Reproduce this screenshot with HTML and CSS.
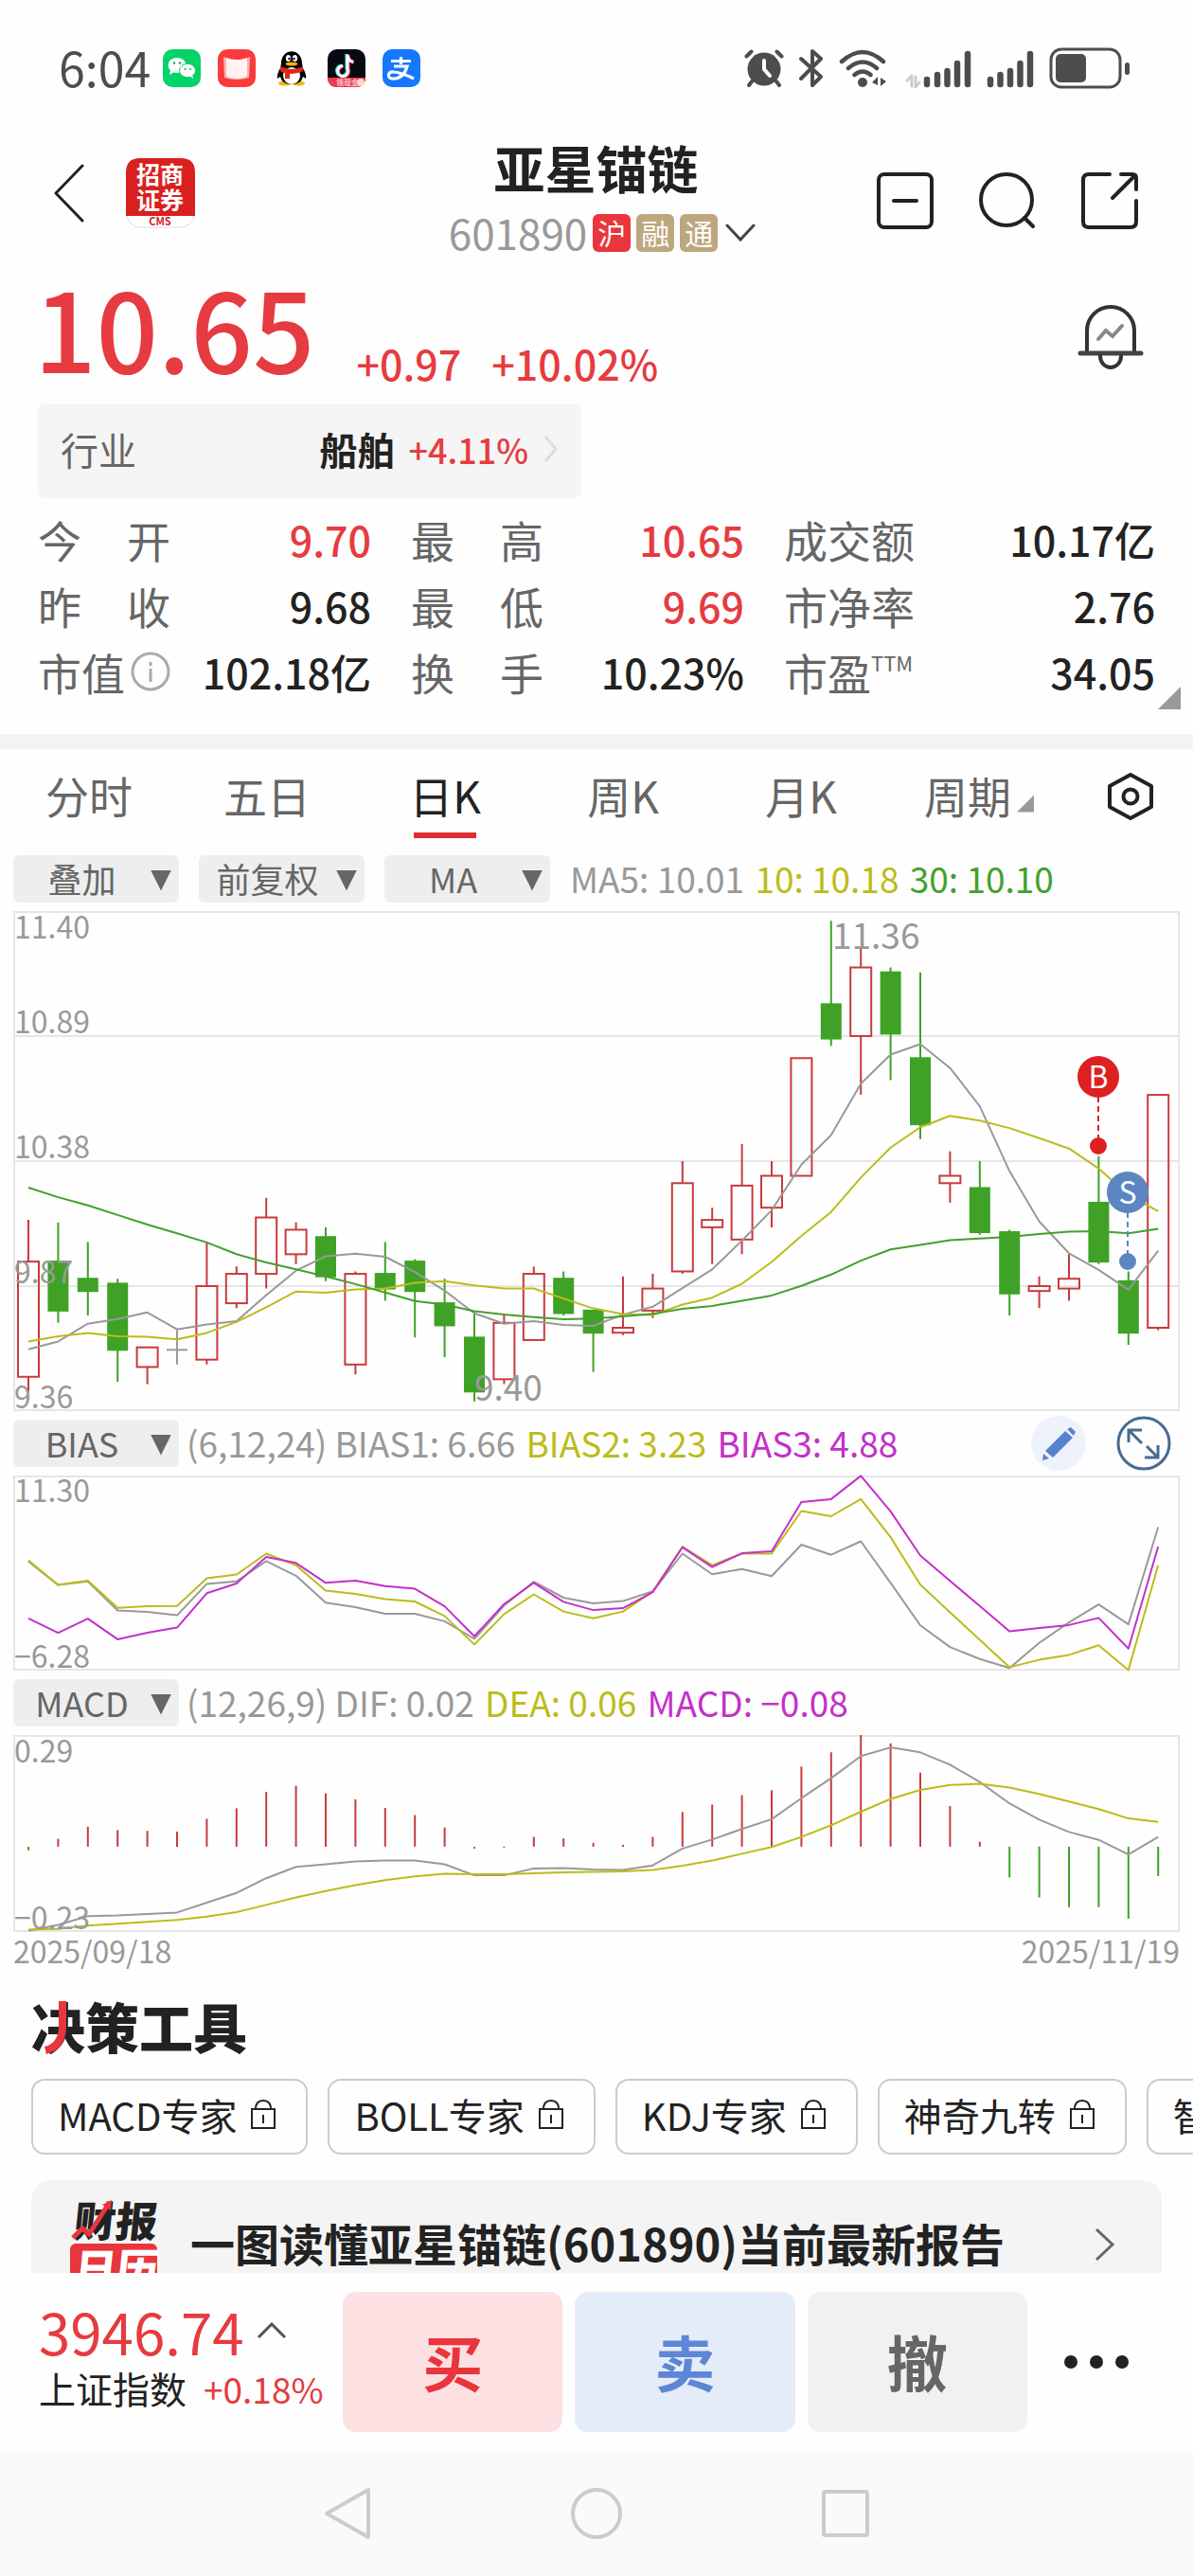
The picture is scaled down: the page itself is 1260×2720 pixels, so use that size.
FILE: index.html
```html
<!DOCTYPE html>
<html lang="zh-CN">
<head>
<meta charset="utf-8">
<meta name="viewport" content="width=device-width, initial-scale=1">
<title>亚星锚链 601890</title>
<link rel="stylesheet" href="styles.css">
</head>
<body>
<div class="screen">

  <div class="status">
    <div class="status-left">
      <span class="clock">6:04</span>
      <svg class="app" viewBox="0 0 40 40"><rect width="40" height="40" rx="10" fill="#06d367"/><ellipse cx="15" cy="17" rx="9.500" ry="8" fill="#fff"/><path d="M8 22l-1 5 5-3z" fill="#fff"/><ellipse cx="26" cy="22.500" rx="8.500" ry="7.200" fill="#fff" stroke="#06d367"/><path d="M28 28l4 3-1-5z" fill="#fff"/><g fill="#06a853"><circle cx="12" cy="14.500" r="1.200"/><circle cx="18" cy="14.500" r="1.200"/><circle cx="23.500" cy="21" r="1"/><circle cx="29" cy="21" r="1"/></g></svg>
      <svg class="app" viewBox="0 0 40 40"><rect width="40" height="40" rx="10" fill="#fb3b3b"/><path d="M6 8l5 2q9 3 18 0l5-2-1 22q-13 4-26 0z" fill="#fbb3ad"/><path d="M9 9q11 4 22 0v20q-11 4-22 0z" fill="#fff2f0"/></svg>
      <svg class="app" viewBox="0 0 40 40"><ellipse cx="13" cy="36" rx="7" ry="2.500" fill="#f5b400"/><ellipse cx="27" cy="36" rx="7" ry="2.500" fill="#f5b400"/><path d="M9 15C9-2 31-2 31 15l1 5q4 7 3 11l-3-2q-2 8-12 8T8 29l-3 2q-1-4 3-11z" fill="#000"/><ellipse cx="20" cy="28" rx="9" ry="9" fill="#fff"/><path d="M8 18q12 6 24 0v5q-6 3-14 3v5h-5v-6q-3 0-5-2z" fill="#e0251b"/><ellipse cx="16.500" cy="9.500" rx="2.600" ry="3.600" fill="#fff"/><ellipse cx="23.500" cy="9.500" rx="2.600" ry="3.600" fill="#fff"/><circle cx="17.500" cy="10" r="1.200"/><circle cx="22.500" cy="10" r="1.200"/><ellipse cx="20" cy="15.500" rx="6.500" ry="2" fill="#f5b400"/></svg>
      <svg class="app" viewBox="0 0 40 40"><rect width="40" height="40" rx="10" fill="#080a12"/><path d="M20 5v15a5.500 5.500 0 1 1-5-3M20 6q1 6 7 7" fill="none" stroke="#27e8e4" stroke-width="3.200"/><path d="M22 6v15a5.500 5.500 0 1 1-5-3M22 7q1 6 6 7" fill="none" stroke="#f52c58" stroke-width="3.200"/><path d="M21 5.500v15a5.500 5.500 0 1 1-5-3M21 6.500q1 6 6 7" fill="none" stroke="#fff" stroke-width="3"/><path d="M0 30h40q0 10-10 10H10Q0 40 0 30z" fill="#ee3a55"/><text x="9" y="38" class="ribbon">领现金</text><circle cx="35" cy="35" r="4" fill="#ffd7c8"/></svg>
      <svg class="app" viewBox="0 0 40 40"><rect width="40" height="40" rx="10" fill="#1677ff"/><path d="M19.500 8v8M9 12.500h21M12 18h14q-4 14-16 13c-6-1-4-8 2-7q9 1 21 7" fill="none" stroke="#fff" stroke-width="3.200"/></svg>
    </div>
    <div class="status-right">
      <svg width="42" height="42" viewBox="0 0 42 42" fill="none" stroke="#4d4d4d" stroke-width="4" stroke-linecap="round"><circle cx="21" cy="22" r="17.500" fill="#4d4d4d" stroke="none"/><path d="M2.500 8.500l5-5M34.500 3.500l5 5M8 35l-3 4M34 35l3 4"/><path d="M21 13v9l6 7" stroke="#fff"/></svg>
      <svg width="26" height="42" viewBox="0 0 26 42" fill="none" stroke="#4d4d4d" stroke-width="4" stroke-linejoin="round" stroke-linecap="round"><path d="M2 11l21 19-9 9V3l9 8L2 32"/></svg>
      <svg width="52" height="42" viewBox="0 0 52 42" fill="none" stroke="#4d4d4d" stroke-width="4.500" stroke-linecap="round"><path d="M3 14q22-20 44 0M10 21q15-13 30 0M16.500 28q8.500-7 17 0"/><circle cx="25" cy="36" r="5" fill="#4d4d4d" stroke="none"/><path d="M41 30v9l-6-3zM44 31v9l6-5z" fill="#4d4d4d" stroke="none"/></svg>
      <svg width="72" height="42" viewBox="0 0 72 42" stroke="#4d4d4d" stroke-width="6.500" stroke-linecap="round"><path d="M9 29v11M9 29l-5 5M13 30v11l4-5" stroke="#ccc" stroke-width="3" fill="none"/><path d="M25 33v5M36 28v10M46.500 24v14M57 16v22M68 6v32"/></svg>
      <svg width="50" height="42" viewBox="0 0 50 42" stroke="#4d4d4d" stroke-width="6.500" stroke-linecap="round"><path d="M4 33v5M14.500 28v10M25 24v14M35.500 16v22M46 6v32"/></svg>
      <svg width="86" height="44" viewBox="0 0 86 44"><rect x="2" y="2" width="73" height="40" rx="11" fill="none" stroke="#4d4d4d" stroke-width="3"/><rect x="7" y="7" width="32" height="30" rx="5" fill="#4d4d4d"/><rect x="80" y="16" width="5" height="13" rx="2.500" fill="#4d4d4d"/></svg>
    </div>
  </div>

  <header class="header">
    <div class="header-left">
      <button class="icon-btn" aria-label="返回"><svg width="32" height="62" viewBox="0 0 32 62" fill="none" stroke="#222" stroke-width="3" stroke-linecap="round" stroke-linejoin="round"><path d="M30 2L2 31l28 29"/></svg></button>
      <svg class="logo" width="73" height="74" viewBox="0 0 73 74"><rect x="1" y="1" width="71" height="72" rx="14" fill="#fff" stroke="#ddd"/><path d="M15 0h43q15 0 15 15v46H0V15Q0 0 15 0z" fill="#d8201f"/><text x="11" y="27" class="logo-cn">招商</text><text x="11" y="54" class="logo-cn">证券</text><text x="36" y="71" class="logo-en">CMS</text></svg>
    </div>
    <div class="header-mid">
      <h1 class="name">亚星锚链</h1>
      <div class="code-row">
        <span class="code">601890</span>
        <span class="tag tag-red">沪</span>
        <span class="tag">融</span>
        <span class="tag">通</span>
        <svg width="32" height="20" viewBox="0 0 32 20" fill="none" stroke="#444" stroke-width="3" stroke-linecap="round"><path d="M2 2l14 15L30 2"/></svg>
      </div>
    </div>
    <div class="header-right">
      <button class="icon-btn" aria-label="移除自选"><svg width="60" height="60" viewBox="0 0 60 60" fill="none" stroke="#222" stroke-width="4" stroke-linecap="round"><rect x="2" y="2" width="56" height="56" rx="6"/><path d="M18 30h24"/></svg></button>
      <button class="icon-btn" aria-label="搜索"><svg width="60" height="60" viewBox="0 0 60 60" fill="none" stroke="#222" stroke-width="4" stroke-linecap="round"><circle cx="29" cy="29" r="27"/><path d="M48 48l9 9"/></svg></button>
      <button class="icon-btn" aria-label="分享"><svg width="60" height="60" viewBox="0 0 60 60" fill="none" stroke="#222" stroke-width="4" stroke-linecap="round"><path d="M30 2H8Q2 2 2 8v44q0 6 6 6h44q6 0 6-6V30M42 2h12q4 0 4 4v12M56 4L33 27"/></svg></button>
    </div>
  </header>

  <section class="quote">
    <div class="price-row">
      <span class="price">10.65</span>
      <span class="change">+0.97</span>
      <span class="change">+10.02%</span>
      <button class="icon-btn bell" aria-label="预警"><svg width="70" height="72" viewBox="0 0 70 72" fill="none" stroke="#333" stroke-width="4" stroke-linecap="round"><path d="M10 50V29a25 25 0 0 1 50 0v21"/><path d="M3 53h64" stroke="#444" stroke-width="5"/><path d="M24 56a11 12 0 0 0 22 0"/><path d="M22 38l8-9 7 6 10-11" stroke="#888"/></svg></button>
    </div>
    <a class="industry" href="#">
      <span class="industry-label">行业</span>
      <strong class="industry-name">船舶</strong>
      <span class="industry-change">+4.11%</span>
      <svg width="16" height="30" viewBox="0 0 16 30" fill="none" stroke="#ddd" stroke-width="3"><path d="M2 2l11 13L2 28"/></svg>
    </a>
    <dl class="stats">
      <div class="stat"><dt><span>今</span><span>开</span></dt><dd class="up">9.70</dd></div>
      <div class="stat"><dt><span>最</span><span>高</span></dt><dd class="up">10.65</dd></div>
      <div class="stat"><dt>成交额</dt><dd>10.17亿</dd></div>
      <div class="stat"><dt><span>昨</span><span>收</span></dt><dd>9.68</dd></div>
      <div class="stat"><dt><span>最</span><span>低</span></dt><dd class="up">9.69</dd></div>
      <div class="stat"><dt>市净率</dt><dd>2.76</dd></div>
      <div class="stat"><dt>市值<svg width="42" height="42" viewBox="0 0 42 42" fill="none" stroke="#aaa" stroke-width="3"><circle cx="21" cy="21" r="19"/><path d="M21 18v14M21 11v4"/></svg></dt><dd>102.18亿</dd></div>
      <div class="stat"><dt><span>换</span><span>手</span></dt><dd>10.23%</dd></div>
      <div class="stat"><dt>市盈<sup>TTM</sup></dt><dd>34.05</dd></div>
    </dl>
    <span class="more-corner"></span>
  </section>

  <nav class="tabs">
    <button class="tab">分时</button>
    <button class="tab">五日</button>
    <button class="tab active">日K</button>
    <button class="tab">周K</button>
    <button class="tab">月K</button>
    <button class="tab">周期<span class="tab-corner"></span></button>
    <button class="tab-settings" aria-label="设置"><svg width="50" height="52" viewBox="0 0 50 52" fill="none" stroke="#222" stroke-width="4" stroke-linejoin="round"><path d="M25 3l22 12v22L25 49 3 37V15z"/><circle cx="25" cy="26" r="7.500"/></svg></button>
  </nav>

  <section class="charts">
    <div class="legend">
      <label class="picker"><select aria-label="叠加"><option>叠加</option></select></label>
      <label class="picker"><select aria-label="复权"><option>前复权</option></select></label>
      <label class="picker"><select aria-label="主图指标"><option>MA</option></select></label>
      <span class="readout"><span class="c-grey">MA5: 10.01</span> <span class="c-yellow">10: 10.18</span> <span class="c-green">30: 10.10</span></span>
    </div>

    <svg class="plot" viewBox="0 0 1232 528">
      <rect class="frame" x="1" y="1" width="1230" height="526"/>
      <path class="frame" d="M0 132h1232M0 264h1232M0 396h1232"/>
      <g id="candles"></g>
      <g id="averages"></g>
      <g class="axis">
        <text x="1" y="29">11.40</text>
        <text x="1" y="129">10.89</text>
        <text x="1" y="261">10.38</text>
        <text x="1" y="393">9.87</text>
        <text x="1" y="525">9.36</text>
      </g>
      <g class="extreme"><text x="865" y="40">11.36</text><text x="487" y="517">9.40</text></g>
      <path d="M1146 196v44" stroke="#dd2022" stroke-width="2" stroke-dasharray="6 4"/>
      <circle cx="1146" cy="175" r="22" fill="#dd2022"/><circle cx="1146" cy="248" r="9" fill="#dd2022"/>
      <path d="M1177 318v44" stroke="#5c86c2" stroke-width="2" stroke-dasharray="6 4"/>
      <circle cx="1177" cy="297" r="22" fill="#5c86c2"/><circle cx="1177" cy="370" r="9" fill="#5c86c2"/>
      <text class="mark" x="1146" y="187">B</text><text class="mark" x="1177" y="309">S</text>
    </svg>

    <div class="legend legend-sub">
      <label class="picker"><select aria-label="副图指标一"><option>BIAS</option></select></label>
      <span class="readout"><span class="c-grey">(6,12,24) BIAS1: 6.66</span> <span class="c-yellow">BIAS2: 3.23</span> <span class="c-purple">BIAS3: 4.88</span></span>
      <span class="tools">
        <button class="icon-btn" aria-label="编辑"><svg width="58" height="58" viewBox="0 0 58 58"><circle cx="29" cy="29" r="29" fill="#eef2fa"/><path d="M36 16l8 7-21 21-8-7zM38 14l4-2 5 5-2 4zM13 40l6 5-7 2z" fill="#5882d0"/></svg></button>
        <button class="icon-btn" aria-label="全屏"><svg width="58" height="58" viewBox="0 0 58 58" fill="none" stroke="#486b90" stroke-width="3"><circle cx="29" cy="29" r="27"/><path d="M13 28V15h14M14 16l13 13M44 31v13H30M43 43L32 32"/></svg></button>
      </span>
    </div>
    <svg class="plot" viewBox="0 0 1232 206">
      <rect class="frame" x="1" y="1" width="1230" height="204"/>
      <g id="bias"></g>
      <g class="axis"><text x="1" y="28">11.30</text><text x="1" y="203">−6.28</text></g>
    </svg>

    <div class="legend legend-sub">
      <label class="picker"><select aria-label="副图指标二"><option>MACD</option></select></label>
      <span class="readout"><span class="c-grey">(12,26,9) DIF: 0.02</span> <span class="c-yellow">DEA: 0.06</span> <span class="c-purple">MACD: −0.08</span></span>
    </div>
    <svg class="plot" viewBox="0 0 1232 208">
      <rect class="frame" x="1" y="1" width="1230" height="206"/>
      <g id="macd"></g>
      <g class="axis"><text x="1" y="29">0.29</text><text x="1" y="205">−0.23</text></g>
    </svg>
    <div class="dates"><span>2025/09/18</span><span>2025/11/19</span></div>
  </section>

  <section class="decide">
    <h2 class="decide-title">决策工具<svg class="title-stroke" width="30" height="60" viewBox="0 0 30 60" fill="none" stroke="#e8363c" stroke-width="8"><path d="M23 2v26q0 22-18 26"/></svg></h2>
    <div class="chips">
      <button class="chip">MACD专家<svg viewBox="0 0 28 34"><use href="#lock"/></svg></button>
      <button class="chip">BOLL专家<svg viewBox="0 0 28 34"><use href="#lock"/></svg></button>
      <button class="chip">KDJ专家<svg viewBox="0 0 28 34"><use href="#lock"/></svg></button>
      <button class="chip">神奇九转<svg viewBox="0 0 28 34"><use href="#lock"/></svg></button>
      <button class="chip">智能盯盘<svg viewBox="0 0 28 34"><use href="#lock"/></svg></button>
    </div>
    <div class="report-clip">
      <a class="report" href="#">
        <svg width="96" height="96" viewBox="0 0 96 96"><g transform="skewX(-6)"><text x="8" y="40" class="badge-top">财报</text></g><path d="M4 41l10-10 7 6L41 6" fill="none" stroke="#e8363c" stroke-width="5"/><path d="M35 6l10-5-1 11z" fill="#e8363c"/><rect x="1" y="47" width="92" height="50" rx="6" fill="#e8363c"/><g transform="skewX(-6)"><text x="14" y="90" class="badge-bottom">日历</text></g></svg>
        <span class="report-text">一图读懂亚星锚链(601890)当前最新报告</span>
        <svg width="22" height="36" viewBox="0 0 22 36" fill="none" stroke="#666" stroke-width="3"><path d="M2 2l17 16L2 34"/></svg>
      </a>
    </div>
  </section>

  <footer class="trade">
    <div class="index">
      <div class="index-value">3946.74<svg width="32" height="18" viewBox="0 0 32 18" fill="none" stroke="#555" stroke-width="3"><path d="M2 16L16 2l14 14"/></svg></div>
      <div class="index-name">上证指数<span>+0.18%</span></div>
    </div>
    <button class="act act-buy">买</button>
    <button class="act act-sell">卖</button>
    <button class="act act-cancel">撤</button>
    <button class="act-more" aria-label="更多"><svg width="70" height="16" viewBox="0 0 70 16" fill="#222"><circle cx="8" cy="8" r="7"/><circle cx="35" cy="8" r="7"/><circle cx="62" cy="8" r="7"/></svg></button>
  </footer>

  <nav class="system">
    <svg width="50" height="56" viewBox="0 0 50 56" fill="none" stroke="#ccc" stroke-width="4" stroke-linejoin="round"><path d="M47 3v50L3 28z"/></svg>
    <svg width="56" height="56" viewBox="0 0 56 56" fill="none" stroke="#ccc" stroke-width="4"><circle cx="28" cy="28" r="25"/></svg>
    <svg width="50" height="50" viewBox="0 0 50 50" fill="none" stroke="#ccc" stroke-width="4"><rect x="2" y="2" width="46" height="46" rx="2"/></svg>
  </nav>
</div>

<svg class="defs" aria-hidden="true">
  <symbol id="lock" viewBox="0 0 28 34"><path d="M2 11h24v20H2zM6 11q0-9 8-9t8 9M14 17v9" fill="none" stroke="#222" stroke-width="2"/></symbol>
</svg>
<script src="chart.js"></script>
</body>
</html>
```
FILE: styles.css
```css
* { box-sizing: border-box; }

body {
  margin: 0;
  background: #fefefe;
  color: #222;
  font-family: "Noto Sans CJK SC", "Noto Sans", sans-serif;
  font-size: 36px;
}

button {
  margin: 0;
  padding: 0;
  border: 0;
  background: none;
  color: inherit;
  font: inherit;
}

svg { display: block; flex: none; }

.defs { position: absolute; width: 0; height: 0; }

.screen {
  display: flex;
  flex-direction: column;
  min-height: 100vh;
  overflow: hidden;
}

/* status bar */
.status {
  display: flex;
  justify-content: space-between;
  align-items: center;
  padding: 50px 66px 0 62px;
  height: 94px;
}
.status-left { display: flex; align-items: center; gap: 18px; }
.status-right { display: flex; align-items: center; gap: 16px; }
.clock {
  width: 92px;
  padding-bottom: 4px;
  color: #4d4d4d;
  font-size: 50px;
  line-height: 40px;
}
.app { width: 40px; height: 40px; }
.ribbon { font-size: 8px; fill: #fff; }

/* title bar */
.header {
  display: grid;
  grid-template-columns: 1fr auto 1fr;
  align-items: center;
  padding: 53px 58px 0 57px;
}
.header-left { display: flex; align-items: center; gap: 44px; padding-bottom: 6px; }
.header-right { display: flex; justify-content: flex-end; gap: 48px; padding-top: 10px; }
.logo { overflow: visible; }
.logo-cn { fill: #fff; font-size: 25px; font-weight: 700; }
.logo-en { fill: #d8201f; font-size: 11px; font-weight: 700; text-anchor: middle; }
.name {
  margin: 0;
  font-size: 54px;
  line-height: 60px;
  font-weight: 700;
  text-align: center;
}
.code-row { display: flex; align-items: center; gap: 6px; margin: 19px 0 0 13px; height: 40px; }
.code { color: #999; font-size: 44px; line-height: 40px; padding-bottom: 2px; }
.tag {
  width: 40px;
  height: 40px;
  border-radius: 6px;
  background: #bda77e;
  color: #fff;
  font-size: 30px;
  line-height: 38px;
  text-align: center;
}
.tag-red { background: #e8363c; }
.code-row svg { margin-left: 2px; }

/* quote */
.quote {
  position: relative;
  padding: 26px 40px 29px;
  border-bottom: 16px solid #f3f3f3;
}
.price-row { display: flex; align-items: flex-end; gap: 32px; color: #e63b40; }
.price {
  margin: 0 12px 0 -4px;
  font-size: 115px;
  font-weight: 500;
  line-height: 104px;
}
.change { font-size: 43px; font-weight: 500; line-height: 26px; }
.bell { margin: 0 12px 4px auto; }
.industry {
  display: flex;
  align-items: center;
  width: 574px;
  height: 100px;
  margin-top: 30px;
  padding: 0 24px 4px;
  border-radius: 8px;
  background: #f5f5f5;
  color: #222;
  font-size: 40px;
  line-height: 50px;
  text-decoration: none;
}
.industry-label { margin-right: auto; color: #666; }
.industry-change { margin: 0 16px 0 14px; color: #e63b40; font-weight: 500; font-size: 36px; }

.stats {
  display: grid;
  grid-template-columns: 352fr 352fr 392fr;
  column-gap: 42px;
  margin: 8px 0 2px;
  font-size: 46px;
  line-height: 70px;
}
.stat { display: flex; justify-content: space-between; white-space: nowrap; }
.stat dt {
  display: flex;
  justify-content: space-between;
  align-items: center;
  min-width: 140px;
  gap: 6px;
  color: #666;
}
.stat dd { margin: 0; font-weight: 500; font-size: 43px; }
.stat sup { margin: -20px auto 0 -6px; font-size: 22px; line-height: 24px; }
.stat .up { color: #e63b40; }
.more-corner {
  position: absolute;
  right: 13px;
  bottom: 26px;
  width: 24px;
  height: 24px;
  background: #999;
  clip-path: polygon(100% 0, 100% 100%, 0 100%);
}

/* period tabs */
.tabs { display: flex; height: 95px; }
.tab {
  position: relative;
  display: flex;
  flex: 1;
  justify-content: center;
  align-items: center;
  color: #666;
  font-size: 46px;
  line-height: 60px;
}
.tab.active { color: #222; }
.tab.active::after {
  content: "";
  position: absolute;
  left: 50%;
  bottom: 1px;
  width: 66px;
  height: 6px;
  margin-left: -33px;
  background: #e02c31;
}
.tab-corner {
  width: 18px;
  height: 18px;
  margin: 20px 0 0 6px;
  background: #999;
  clip-path: polygon(100% 0, 100% 100%, 0 100%);
}
.tab-settings { display: grid; place-items: center; width: 132px; padding-top: 4px; }

/* charts */
.charts { padding: 17px 14px 0; }
.legend { display: flex; align-items: center; height: 50px; margin-bottom: 9px; }
.legend-sub { margin: 9px 0; }
.picker { display: grid; width: 175px; margin-right: 21px; }
.picker select {
  grid-area: 1 / 1;
  width: 100%;
  height: 50px;
  padding: 0 30px 3px 0;
  border: 0;
  border-radius: 6px;
  appearance: none;
  background: #eee;
  color: #666;
  font: inherit;
  line-height: 46px;
  text-align-last: center;
}
.picker::after {
  content: "";
  grid-area: 1 / 1;
  align-self: center;
  justify-self: end;
  width: 22px;
  height: 22px;
  margin: 3px 8px 0 0;
  background: #666;
  clip-path: polygon(0 0, 100% 0, 50% 100%);
  pointer-events: none;
}
.readout { padding-bottom: 2px; font-size: 37px; white-space: nowrap; line-height: 48px; }
.readout span + span { margin-left: 3px; }
.legend-sub .picker { margin-right: 8px; }
.tools { display: flex; gap: 32px; margin: 0 9px 0 auto; }
.c-grey { color: #999; }
.c-yellow { color: #bcbc1a; }
.c-green { color: #43a02c; }
.c-purple { color: #c430c9; }

.plot { width: 100%; height: auto; overflow: visible; }
.frame { fill: none; stroke: #e6e6e6; stroke-width: 2; }
.axis { fill: #999; font-size: 32px; }
.extreme { fill: #999; font-size: 37px; }
.mark { fill: #fff; font-size: 32px; text-anchor: middle; }
.series { fill: none; stroke-width: 2; stroke-linejoin: round; }
.s-grey { stroke: #999; }
.s-yellow { stroke: #bcbc1a; }
.s-green { stroke: #43a02c; }
.s-purple { stroke: #c430c9; }
.rise { fill: none; stroke: #c93a3c; stroke-width: 2; }
.fall { fill: #3fa226; stroke: #3fa226; stroke-width: 2; }
.flat { stroke: #999; stroke-width: 2; fill: none; }
.dates {
  display: flex;
  justify-content: space-between;
  color: #999;
  font-size: 32px;
  line-height: 38px;
}

/* decision tools */
.decide { padding: 29px 33px 0; }
.decide-title {
  position: relative;
  margin: 0;
  font-size: 57px;
  font-weight: 900;
  line-height: 62px;
}
.title-stroke { position: absolute; left: 10px; top: 4px; }
.chips { display: flex; gap: 21px; margin-top: 26px; }
.chip {
  display: flex;
  flex: none;
  align-items: center;
  gap: 14px;
  height: 80px;
  padding: 0 31px 4px 26px;
  border: 2px solid #ccc;
  border-radius: 14px;
  font-size: 40px;
}
.chip svg { width: 28px; height: 34px; }
.report-clip { height: 98px; margin-top: 27px; overflow: hidden; }
.report {
  display: flex;
  align-items: center;
  height: 136px;
  padding: 0 49px 0 40px;
  border-radius: 20px;
  background: #f4f4f4;
  color: #222;
  text-decoration: none;
}
.report-text { margin: 0 auto 0 32px; padding-bottom: 4px; font-size: 47px; font-weight: 700; line-height: 60px; white-space: nowrap; }
.badge-top { font-size: 44px; font-weight: 900; fill: #222; }
.badge-bottom { font-size: 44px; font-weight: 900; fill: #fff; }

/* trade bar */
.trade {
  display: flex;
  align-items: center;
  gap: 13px;
  height: 188px;
  padding: 0 41px;
}
.index { width: 308px; padding-bottom: 18px; white-space: nowrap; }
.index-value {
  display: flex;
  align-items: center;
  gap: 14px;
  color: #e63b40;
  font-size: 60px;
  line-height: 72px;
}
.index-name { font-size: 39px; line-height: 48px; }
.index-name span { margin-left: 18px; color: #e63b40; font-size: 37px; }
.act {
  flex: 1;
  height: 148px;
  padding-bottom: 4px;
  border-radius: 14px;
  font-size: 64px;
  font-weight: 700;
}
.act-buy { background: #fde0e2; color: #e8363c; }
.act-sell { background: #e5ecf9; color: #5d86d6; }
.act-cancel { background: #f1f1f1; color: #666; }
.act-more { display: flex; justify-content: center; width: 121px; }

/* system navigation */
.system {
  display: flex;
  flex: 1;
  justify-content: center;
  align-items: center;
  gap: 210px;
  min-height: 130px;
  background: #fafafa;
}
```
FILE: chart.js
```javascript
const NS = "http://www.w3.org/2000/svg";
const STEP = 31.4;
const START = 16;
const xAt = (i) => START + STEP * i;

function add(parent, tag, attrs) {
  const node = document.createElementNS(NS, tag);
  for (const key in attrs) node.setAttribute(key, attrs[key]);
  parent.appendChild(node);
}

function scale(top, bottom, height) {
  return (v) => ((v - top) / (bottom - top)) * height;
}

function line(parent, values, y, cls) {
  const points = values.map((v, i) => xAt(i).toFixed(1) + "," + y(v).toFixed(1)).join(" ");
  add(parent, "polyline", { points, class: "series " + cls });
}

// open, high, low, close for each trading day
const days = [
  [9.5, 10.14, 9.44, 9.97], [9.97, 10.13, 9.72, 9.77], [9.9, 10.05, 9.75, 9.85],
  [9.88, 9.9, 9.48, 9.61], [9.54, 9.62, 9.47, 9.62], [9.61, 9.69, 9.55, 9.61],
  [9.57, 10.05, 9.55, 9.87], [9.8, 9.95, 9.78, 9.92], [9.92, 10.23, 9.86, 10.15],
  [10, 10.13, 9.96, 10.1], [10.07, 10.11, 9.89, 9.91], [9.55, 9.93, 9.51, 9.92],
  [9.92, 10.05, 9.81, 9.86], [9.97, 9.98, 9.66, 9.85], [9.8, 9.9, 9.58, 9.71],
  [9.66, 9.77, 9.4, 9.44], [9.49, 9.75, 9.47, 9.72], [9.65, 9.95, 9.65, 9.92],
  [9.9, 9.93, 9.75, 9.76], [9.77, 9.77, 9.52, 9.68], [9.68, 9.91, 9.67, 9.7],
  [9.77, 9.92, 9.74, 9.86], [9.93, 10.38, 9.92, 10.29], [10.11, 10.19, 9.96, 10.14],
  [10.06, 10.45, 10, 10.28], [10.19, 10.38, 10.11, 10.32], [10.32, 10.8, 10.32, 10.8],
  [11.02, 11.36, 10.85, 10.88], [10.89, 11.25, 10.65, 11.17], [11.15, 11.17, 10.71, 10.9],
  [10.8, 11.15, 10.47, 10.53], [10.29, 10.42, 10.21, 10.32], [10.27, 10.38, 10.08, 10.09],
  [10.09, 10.1, 9.75, 9.84], [9.85, 9.91, 9.78, 9.87], [9.86, 10, 9.81, 9.9],
  [10.21, 10.4, 9.96, 9.97], [9.89, 9.93, 9.63, 9.68], [9.7, 10.65, 9.69, 10.65]
];

const candles = document.getElementById("candles");
const price = scale(11.4, 9.36, 528);
days.forEach(([open, high, low, close], i) => {
  const x = xAt(i);
  const top = price(Math.max(open, close));
  const bottom = price(Math.min(open, close));
  const cls = close > open ? "rise" : close < open ? "fall" : "flat";
  add(candles, "path", {
    class: cls,
    d: `M${x} ${price(high)}V${top}M${x} ${bottom}V${price(low)}`
  });
  const half = cls === "fall" ? 10 : 11;
  add(candles, "rect", { class: cls, x: x - half, y: top, width: half * 2, height: bottom - top });
  if (cls === "flat") add(candles, "path", { class: cls, d: `M${x - half} ${top}h${half * 2}` });
});

const averages = document.getElementById("averages");
const level = scale(374, 1524, 528);
line(averages, [1382, 1364, 1323, 1312, 1297, 1336, 1325, 1317, 1257, 1201, 1168, 1162, 1169, 1204, 1247, 1299, 1323, 1317, 1326, 1328, 1302, 1284, 1241, 1198, 1132, 1062, 957, 889, 771, 704, 680, 735, 823, 972, 1088, 1161, 1199, 1245, 1155], level, "s-grey");
line(averages, [1364, 1352, 1344, 1352, 1353, 1359, 1344, 1319, 1285, 1249, 1252, 1244, 1242, 1229, 1225, 1235, 1242, 1242, 1265, 1288, 1301, 1303, 1279, 1263, 1231, 1181, 1121, 1066, 987, 918, 871, 845, 856, 873, 896, 920, 966, 1028, 1064], level, "s-yellow");
line(averages, [1010, 1032, 1051, 1073, 1095, 1115, 1136, 1163, 1182, 1198, 1214, 1232, 1251, 1271, 1279, 1294, 1302, 1308, 1313, 1311, 1306, 1300, 1289, 1282, 1270, 1258, 1236, 1210, 1178, 1152, 1142, 1131, 1127, 1123, 1117, 1111, 1110, 1115, 1105], level, "s-green");

const bias = document.getElementById("bias");
const biasY = scale(197, 719, 206);
line(bias, [427, 490, 480, 558, 562, 571, 487, 480, 426, 465, 537, 549, 567, 567, 587, 634, 545, 481, 524, 539, 533, 507, 406, 461, 447, 466, 382, 409, 373, 484, 598, 656, 688, 712, 645, 590, 542, 595, 335], biasY, "s-grey");
line(bias, [424, 490, 478, 551, 547, 546, 472, 462, 406, 437, 505, 514, 528, 534, 573, 649, 568, 515, 561, 579, 561, 508, 387, 437, 406, 406, 292, 306, 260, 362, 489, 563, 637, 710, 690, 677, 651, 718, 437], biasY, "s-yellow");
line(bias, [579, 618, 580, 635, 618, 604, 512, 486, 415, 431, 484, 478, 493, 500, 547, 627, 541, 484, 535, 557, 552, 509, 389, 442, 405, 400, 268, 260, 198, 293, 411, 479, 546, 614, 605, 597, 578, 660, 387], biasY, "s-purple");

const macd = document.getElementById("macd");
const macdY = scale(892, 1416, 208);
const ZERO = 1189;
const bars = [1199, 1168, 1136, 1145, 1147, 1149, 1115, 1087, 1043, 1027, 1047, 1063, 1086, 1105, 1138, 1194, 1192, 1163, 1167, 1179, 1184, 1163, 1097, 1077, 1052, 1039, 976, 938, 892, 914, 992, 1081, 1176, 1271, 1324, 1350, 1350, 1381, 1267];
bars.forEach((v, i) => {
  add(macd, "path", { class: v < ZERO ? "rise" : "fall", d: `M${xAt(i)} ${macdY(ZERO)}V${macdY(v)}` });
});
line(macd, [1413, 1397, 1374, 1372, 1368, 1364, 1338, 1312, 1273, 1243, 1236, 1228, 1226, 1226, 1236, 1265, 1265, 1247, 1246, 1250, 1251, 1239, 1194, 1170, 1142, 1116, 1060, 1007, 948, 925, 938, 971, 1017, 1074, 1117, 1150, 1171, 1210, 1163], macdY, "s-grey");
line(macd, [1410, 1408, 1399, 1394, 1389, 1384, 1375, 1363, 1344, 1324, 1307, 1291, 1278, 1268, 1261, 1262, 1262, 1260, 1257, 1256, 1255, 1251, 1240, 1226, 1208, 1190, 1163, 1132, 1096, 1062, 1038, 1025, 1022, 1032, 1049, 1069, 1089, 1114, 1123], macdY, "s-yellow");
```
